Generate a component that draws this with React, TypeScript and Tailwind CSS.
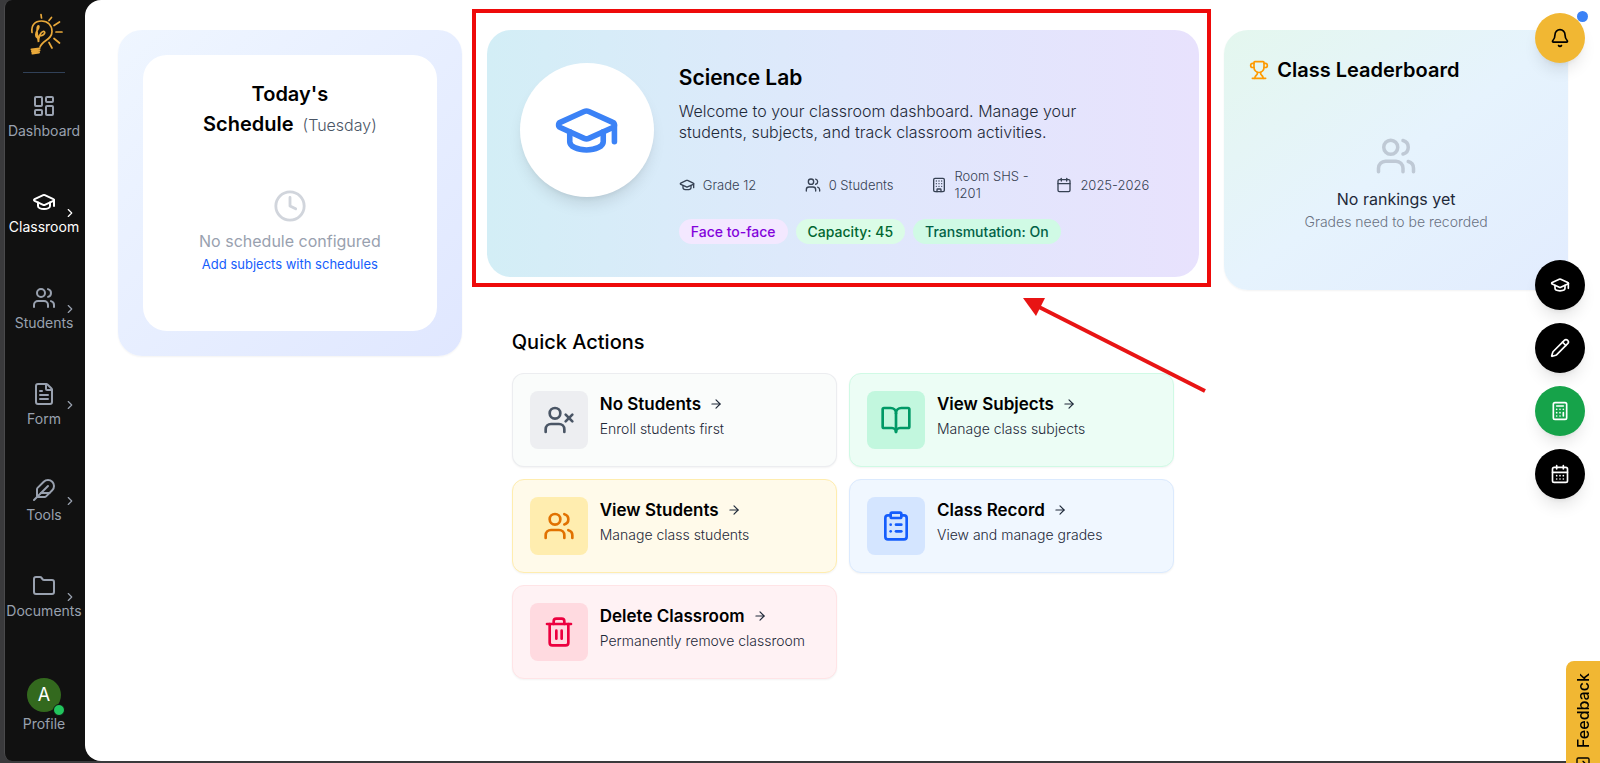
import React from 'react';
import clsx from 'clsx';
import {
  ArrowRight,
  Bell,
  BookOpen,
  Building,
  Calculator,
  Calendar,
  CalendarDays,
  ChevronRight,
  ClipboardList,
  Clock,
  Feather,
  FileText,
  Folder,
  GraduationCap,
  LayoutDashboard,
  LucideIcon,
  Pencil,
  SquareArrowRight,
  Trash2,
  Trophy,
  Users,
  UserX,
} from 'lucide-react';

type NavItem = { label: string; icon: LucideIcon; active?: boolean; menu?: boolean };

const navItems: NavItem[] = [
  { label: 'Dashboard', icon: LayoutDashboard },
  { label: 'Classroom', icon: GraduationCap, active: true, menu: true },
  { label: 'Students', icon: Users, menu: true },
  { label: 'Form', icon: FileText, menu: true },
  { label: 'Tools', icon: Feather, menu: true },
  { label: 'Documents', icon: Folder, menu: true },
];

const details = [
  { label: 'Grade 12', icon: GraduationCap },
  { label: '0 Students', icon: Users },
  { label: 'Room SHS - 1201', icon: Building },
  { label: '2025-2026', icon: Calendar },
];

const tags = [
  { label: 'Face to-face', style: 'bg-purple-100 text-purple-700' },
  { label: 'Capacity: 45', style: 'bg-green-100 text-green-800' },
  { label: 'Transmutation: On', style: 'bg-emerald-100 text-emerald-800' },
];

const actions = [
  {
    title: 'No Students',
    text: 'Enroll students first',
    icon: UserX,
    card: 'bg-[#fafcfb] border-gray-200/70',
    tile: 'bg-[#edeef1] text-gray-600',
  },
  {
    title: 'View Subjects',
    text: 'Manage class subjects',
    icon: BookOpen,
    card: 'bg-emerald-50 border-emerald-100',
    tile: 'bg-[#c2f7de] text-emerald-600',
  },
  {
    title: 'View Students',
    text: 'Manage class students',
    icon: Users,
    card: 'bg-[#fffaea] border-[#ffedaf]',
    tile: 'bg-[#ffedaf] text-amber-600',
  },
  {
    title: 'Class Record',
    text: 'View and manage grades',
    icon: ClipboardList,
    card: 'bg-[#f0f7ff] border-blue-100',
    tile: 'bg-[#d4e5ff] text-blue-600',
  },
  {
    title: 'Delete Classroom',
    text: 'Permanently remove classroom',
    icon: Trash2,
    card: 'bg-[#fff2f4] border-rose-100',
    tile: 'bg-[#ffdae0] text-rose-600',
  },
];

const tools = [
  { label: 'Classes', icon: GraduationCap, style: 'bg-black' },
  { label: 'Write', icon: Pencil, style: 'bg-black' },
  { label: 'Calculator', icon: Calculator, style: 'bg-[#16a34a]' },
  { label: 'Calendar', icon: CalendarDays, style: 'bg-black' },
];

const Logo = () => (
  <svg viewBox="0 0 34 44" className="w-[34px] h-[44px] overflow-visible" fill="none" stroke="#e9a93a" strokeWidth="1.7" strokeLinecap="round">
    <path d="M5 20.500C4 13 8 9 14.500 9C21 9 25 13.500 25 19.500C25 28 15.500 28 13 35" />
    <path d="M10.500 26C8 25 8.500 21 10.500 18C12.500 15 12 13.500 11 14C9 15.500 10 22 11.500 30C11.500 25 13.500 20 16 19.500C19 19 18.500 23.500 12 24" />
    <path d="M4.500 37.500L12.500 36.500M5 39.500L12.500 38.500M5.500 41.500L12 40.500" strokeWidth="2" />
    <path d="M14.500 6L14 2.500M22 8.500L24.500 5.500M27 13.500L32.500 10M29 20H35M27 26.500L32.500 31M22 30.500L25 36" />
  </svg>
);

const Sidebar = () => (
  <aside className="flex flex-col items-center w-20 shrink-0 pt-3 pb-7 pr-0.5">
    <Logo />
    <hr className="w-[42px] mt-4 mb-[21px] border-slate-700" />
    <nav className="flex flex-col gap-[50px] w-full">
      {navItems.map(({ label, icon: Icon, active, menu }) => (
        <a
          key={label}
          href="#"
          className={clsx('relative flex flex-col items-center gap-1', active ? 'text-white' : 'text-gray-400')}
        >
          <Icon className="w-6 h-6" />
          <span className="text-sm leading-[18px]">{label}</span>
          {menu && <ChevronRight className="absolute right-1.5 top-4 w-3.5 h-3.5" />}
        </a>
      ))}
    </nav>
    <a href="#" className="flex flex-col items-center gap-[3px] mt-auto text-gray-400">
      <span className="relative flex items-center justify-center w-[34px] h-[34px] rounded-full bg-[#33691e] text-white text-lg">
        A
        <span className="absolute -right-1 -bottom-1 w-3 h-3 rounded-full bg-[#22c55e] border border-[#111]" />
      </span>
      <span className="text-sm leading-[18px]">Profile</span>
    </a>
  </aside>
);

const Schedule = () => (
  <section className="p-[25px] rounded-[24px] bg-linear-to-br from-blue-50 to-indigo-100 shadow-xs">
    <div className="flex flex-col items-center h-[276px] px-6 pt-6 rounded-[24px] bg-white text-center">
      <h2 className="text-[20px] leading-[30px] font-semibold">
        Today's
        <br />
        Schedule <span className="ml-1 text-base font-light text-gray-600">(Tuesday)</span>
      </h2>
      <Clock className="w-[34px] h-[34px] mt-[50px] text-gray-300" />
      <p className="mt-[6px] text-base leading-6 text-gray-400">No schedule configured</p>
      <a href="#" className="text-[13px] leading-[22px] text-blue-600">
        Add subjects with schedules
      </a>
    </div>
  </section>
);

const ClassroomCard = () => (
  <section className="relative flex gap-[25px] p-[33px] rounded-[24px] bg-linear-to-r from-[#d3eef6] via-[#dfe8fc] to-[#e8e2fd]">
    <div className="flex items-center justify-center w-[134px] h-[134px] shrink-0 rounded-full bg-white shadow-lg">
      <GraduationCap className="w-[67px] h-[67px] text-[#3b82f6]" />
    </div>
    <div className="grow">
      <h1 className="text-[21px] leading-[30px] font-semibold">Science Lab</h1>
      <p className="max-w-[430px] mt-2 text-base leading-[21px] font-light text-gray-800">
        Welcome to your classroom dashboard. Manage your students, subjects, and track classroom activities.
      </p>
      <div className="grid grid-cols-4 gap-4 mt-[25px]">
        {details.map(({ label, icon: Icon }) => (
          <div key={label} className="flex items-center gap-2 text-[13px] leading-[17px] font-light text-gray-700">
            <Icon className="w-4 h-4 shrink-0" />
            <span>{label}</span>
          </div>
        ))}
      </div>
      <div className="flex gap-2 mt-[17px]">
        {tags.map((tag) => (
          <span key={tag.label} className={clsx('px-3 rounded-full text-sm leading-[25px] font-medium', tag.style)}>
            {tag.label}
          </span>
        ))}
      </div>
    </div>
    {/* highlight frame */}
    <div className="absolute -left-[15px] -right-3 -top-[21px] -bottom-[10px] border-4 border-[#ee0a0a] pointer-events-none" />
    <svg
      viewBox="0 0 184 98"
      className="absolute -right-2 top-[266px] w-[184px] h-[98px] z-10 pointer-events-none"
      fill="#e81414"
    >
      <path d="M0 2H22L13 20Z" />
      <path d="M16 11L182 95" stroke="#e81414" strokeWidth="4" />
    </svg>
  </section>
);

const QuickActions = () => (
  <section className="mt-[50px] px-[25px]">
    <h2 className="text-[20px] leading-[30px] font-medium">Quick Actions</h2>
    <div className="grid grid-cols-2 gap-3 mt-4">
      {actions.map(({ title, text, icon: Icon, card, tile }) => (
        <button
          key={title}
          type="button"
          className={clsx('flex gap-3 h-[94px] p-[17px] rounded-xl border text-left shadow-xs', card)}
        >
          <span className={clsx('flex items-center justify-center w-[58px] h-[58px] shrink-0 rounded-lg', tile)}>
            <Icon className="w-8 h-8" />
          </span>
          <span className="flex flex-col">
            <span className="flex items-center gap-2 text-[17px] leading-[26px] font-semibold">
              {title}
              <ArrowRight className="w-3.5 h-3.5 text-gray-800" />
            </span>
            <span className="text-sm leading-6 font-light text-gray-800">{text}</span>
          </span>
        </button>
      ))}
    </div>
  </section>
);

const Leaderboard = () => (
  <section className="h-[260px] p-[25px] rounded-[24px] bg-linear-to-br from-[#e4f7ee] via-[#e6f3fd] to-[#e2ecfe] shadow-xs">
    <h2 className="flex items-center gap-2 text-[20px] leading-[30px] font-semibold">
      <Trophy className="w-5 h-5 text-amber-500" />
      Class Leaderboard
    </h2>
    <div className="flex flex-col items-center mt-[50px]">
      <Users className="w-[42px] h-[42px] text-gray-400 opacity-50" />
      <p className="mt-2.5 text-base leading-6 text-gray-800">No rankings yet</p>
      <p className="text-sm leading-[22px] font-light text-gray-500">Grades need to be recorded</p>
    </div>
  </section>
);

const FloatingButtons = () => (
  <>
    <button
      type="button"
      aria-label="Notifications"
      className="fixed right-[15px] top-[13px] flex items-center justify-center w-[50px] h-[50px] rounded-full bg-[#f1b733] shadow-lg"
    >
      <Bell className="w-5 h-5" />
      <span className="absolute -right-[3px] -top-[2px] w-[11px] h-[11px] rounded-full bg-[#3b82f6]" />
    </button>
    <div className="fixed right-[15px] top-[260px] flex flex-col gap-[13px]">
      {tools.map(({ label, icon: Icon, style }) => (
        <button
          key={label}
          type="button"
          aria-label={label}
          className={clsx('flex items-center justify-center w-[50px] h-[50px] rounded-full text-white shadow-lg', style)}
        >
          <Icon className="w-5 h-5" />
        </button>
      ))}
    </div>
    <button
      type="button"
      className="fixed right-0 top-[661px] flex items-center justify-end gap-2 w-[34px] h-[124px] pb-3 px-[5px] rounded-r-lg bg-[#f1b733] text-base leading-6 font-medium [writing-mode:vertical-rl] rotate-180"
    >
      <SquareArrowRight className="w-4 h-4 shrink-0 rotate-180" />
      Feedback
    </button>
  </>
);

export default function App() {
  return (
    <div className="h-screen overflow-hidden bg-[#3a3a3c] pl-1 pb-0.5 font-['Inter',sans-serif] text-black">
      <div className="flex h-full rounded-l-lg border-l border-[#4a4a4c] bg-[#111]">
        <Sidebar />
        <main className="grow pl-[33px] pr-8 pt-[30px] rounded-l-[16px] bg-white">
          <div className="grid grid-cols-12 gap-[25px] items-start">
            <div className="col-span-3">
              <Schedule />
            </div>
            <div className="col-span-6">
              <ClassroomCard />
              <QuickActions />
            </div>
            <div className="col-span-3">
              <Leaderboard />
            </div>
          </div>
        </main>
      </div>
      <FloatingButtons />
    </div>
  );
}
